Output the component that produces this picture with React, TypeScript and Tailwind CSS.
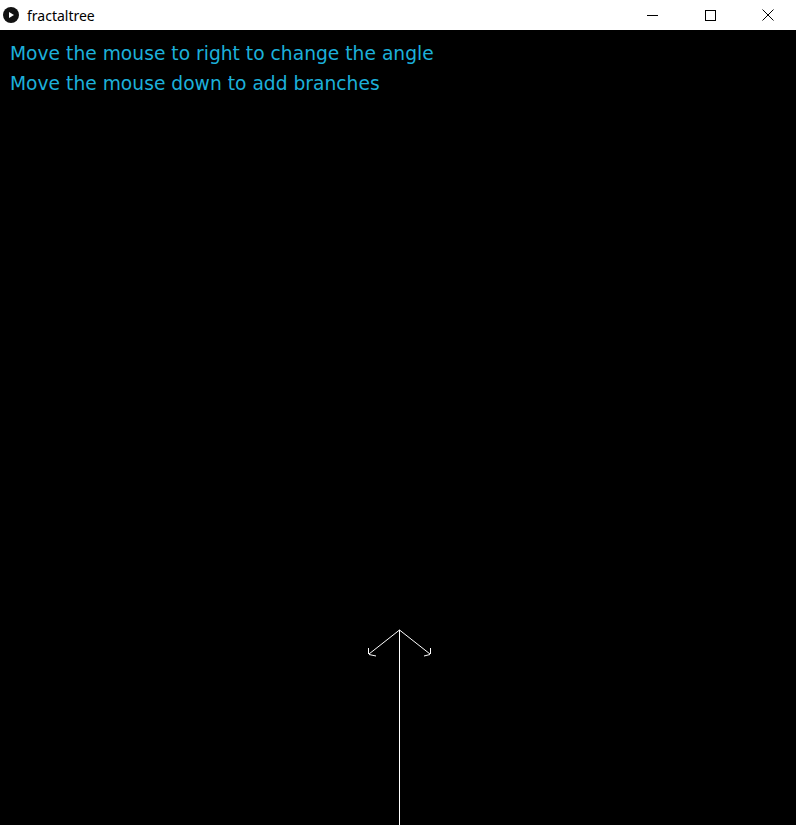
function TitleBar() {
  return (
    <div className="flex h-[30px] items-center bg-white font-['Noto_Sans',sans-serif] text-[14px] text-black">
      <div className="ml-[3px] flex h-[16px] w-[16px] items-center justify-center rounded-full bg-[#111]">
        <svg width="8" height="8" viewBox="0 0 8 8">
          <path d="M2 1 L7 4 L2 7 Z" fill="#fff" />
        </svg>
      </div>
      <span className="ml-[8px]">fractaltree</span>
      <div className="ml-auto flex h-full">
        <button className="flex w-[58px] items-center justify-center pl-[2px]">
          <svg width="11" height="11" viewBox="0 0 11 11">
            <path d="M0 5.5 H11" stroke="#000" strokeWidth={1} />
          </svg>
        </button>
        <button className="flex w-[58px] items-center justify-center pl-[2px]">
          <svg width="11" height="11" viewBox="0 0 11 11">
            <rect x="0.5" y="0.5" width="10" height="10" fill="none" stroke="#000" strokeWidth={1} />
          </svg>
        </button>
        <button className="flex w-[58px] items-center justify-center pl-[2px]">
          <svg width="12" height="12" viewBox="0 0 12 12">
            <path d="M0.5 0.5 L11.5 11.5 M11.5 0.5 L0.5 11.5" stroke="#000" strokeWidth={1} />
          </svg>
        </button>
      </div>
    </div>
  );
}

// lines of the tree, in canvas coordinates
const branches = [
  [399.5, 795, 399.5, 600],
  [399.5, 600, 369, 624],
  [399.5, 600, 430, 624],
  [368.5, 624, 368.5, 618],
  [369, 624.5, 376, 626],
  [430.5, 624, 430.5, 618],
  [430, 624.5, 424, 626],
];

export default function App() {
  return (
    <div className="w-[796px] h-[825px] overflow-hidden bg-black">
      <TitleBar />
      <div className="relative h-[795px] bg-black">
        <div className="px-[10px] pt-[9px] font-['DejaVu_Sans',sans-serif] text-[18.7px] leading-[30px] text-[#1cb0da]">
          <div>Move the mouse to right to change the angle</div>
          <div>Move the mouse down to add branches</div>
        </div>
        <svg className="absolute inset-0" width="796" height="795">
          {branches.map((b, i) => (
            <line key={i} x1={b[0]} y1={b[1]} x2={b[2]} y2={b[3]} stroke="#fff" strokeWidth={1} />
          ))}
        </svg>
      </div>
    </div>
  );
}
